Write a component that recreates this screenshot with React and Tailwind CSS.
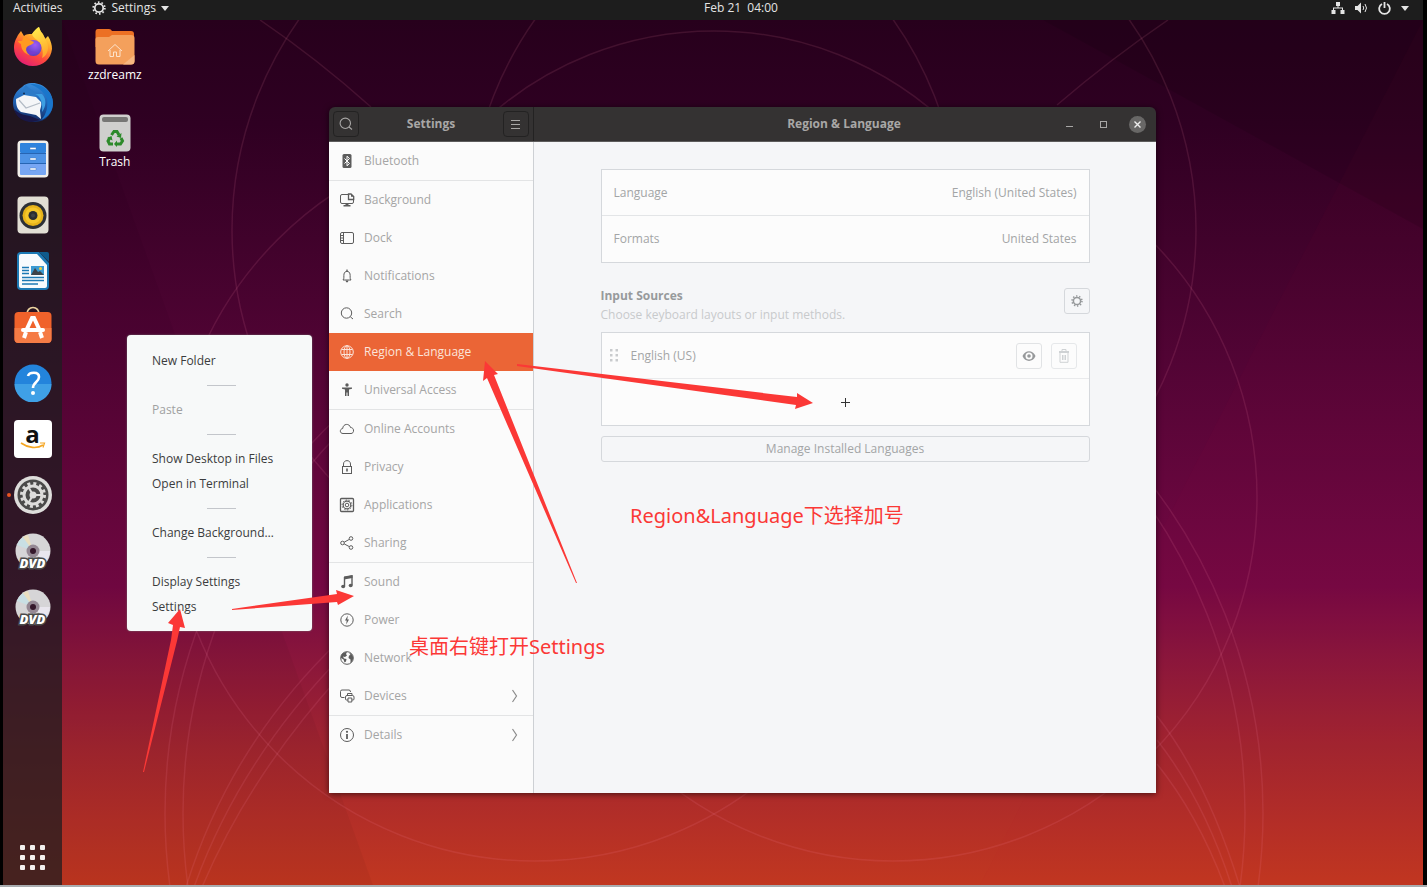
import { useState } from "react";

const dockApps = [
  { name: "Firefox", Icon: FirefoxIcon },
  { name: "Thunderbird", Icon: ThunderbirdIcon },
  { name: "Files", Icon: FilesIcon },
  { name: "Rhythmbox", Icon: RhythmboxIcon },
  { name: "LibreOffice Writer", Icon: WriterIcon },
  { name: "Ubuntu Software", Icon: SoftwareIcon },
  { name: "Help", Icon: HelpIcon },
  { name: "Amazon", Icon: AmazonIcon },
  { name: "Settings", Icon: SettingsIcon, running: true },
  { name: "DVD 1", Icon: DvdIcon },
  { name: "DVD 2", Icon: DvdIcon },
];

const sidebarGroups = [
  ["Bluetooth"],
  ["Background", "Dock", "Notifications", "Search", "Region & Language", "Universal Access"],
  ["Online Accounts", "Privacy", "Applications", "Sharing"],
  ["Sound", "Power", "Network", "Devices"],
  ["Details"],
];

const menuGroups = [
  ["New Folder"],
  ["Paste"],
  ["Show Desktop in Files", "Open in Terminal"],
  ["Change Background…"],
  ["Display Settings", "Settings"],
];

function FirefoxIcon() {
  return (
    <svg width="40" height="40" viewBox="0 0 40 40">
      <defs>
        <linearGradient id="fx1" x1="0.8" y1="0" x2="0.25" y2="1">
          <stop offset="0" stopColor="#fff24a" />
          <stop offset="0.35" stopColor="#ffa52b" />
          <stop offset="0.65" stopColor="#ff4a3c" />
          <stop offset="1" stopColor="#e01a78" />
        </linearGradient>
        <radialGradient id="fx2" cx="0.6" cy="0.3" r="0.8">
          <stop offset="0" stopColor="#a05bf5" />
          <stop offset="1" stopColor="#4b3ab8" />
        </radialGradient>
        <linearGradient id="fx3" x1="0" y1="0" x2="0.4" y2="1">
          <stop offset="0" stopColor="#fff452" />
          <stop offset="1" stopColor="#ffb02e" />
        </linearGradient>
      </defs>
      <path d="M5 8 L8 4 L11 9 C13 7 16 7 19 7 C21 4 24 1 26 0 C27 3 28 5 30 7 L32 12 C33 11 34 10 35 9 C38 14 39 18 39 22 C38 32 30 39 20 39 C9 39 1 31 1 21 C1 15 3 12 5 8 Z" fill="url(#fx1)" />
      <path d="M19 7 C21 4 24 1 26 0 C27 5 31 8 33 13 C37 20 35 28 29 31 C31 26 29 19 26 15 C24 12 20 11 19 7 Z" fill="url(#fx3)" opacity="0.9" />
      <circle cx="20.500" cy="21" r="8" fill="url(#fx2)" />
      <path d="M11 9 C14 12 17 13 21 15 C20 18 16 18 14 20 C12 22 14 26 17 28 C11 27 8 22 8 17 C6 16 5 15 5 14 L9 14 Z" fill="#ff9a20" />
      <path d="M13 22 C16 24 20 25 24 25 C22 28 17 29 14 26 Z" fill="#7a3ad0" opacity="0.7" />
    </svg>
  );
}

function ThunderbirdIcon() {
  return (
    <svg width="42" height="42" viewBox="0 0 42 42">
      <defs>
        <linearGradient id="tb1" x1="0.6" y1="0" x2="0.5" y2="1">
          <stop offset="0" stopColor="#3a8fdd" />
          <stop offset="0.5" stopColor="#1f62b4" />
          <stop offset="1" stopColor="#142860" />
        </linearGradient>
      </defs>
      <path d="M10 5 C13 2 16 1 19 1 C30 0 41 9 41 21 C41 31 34 40 23 40 C12 40 1 33 1 21 C1 14 4 9 10 5 Z" fill="url(#tb1)" />
      <path d="M14 3 C9 8 10 13 14 15 L27 14 C24 9 18 8 14 3 Z" fill="#2c7ac8" />
      <path d="M18 2 C25 5 32 9 35 17 C36 24 35 32 29 38 C37 35 41 28 41 21 C41 10 30 1 18 2 Z" fill="#1a76cb" />
      <path d="M23 12 C29 14 31 22 30 30 C34 25 35 17 30 12 Z" fill="#3d9fe2" />
      <path d="M4 17 L12 13 L24 15 L29 20 C30 24 28 27 28 29 L29 37 L24 33 L9 30 C5 27 4 23 4 17 Z" fill="#f5f6f8" />
      <path d="M7 18 L14 26 L28 21" fill="none" stroke="#b4bcc6" strokeWidth="1.200" />
      <circle cx="12" cy="11.500" r="1" fill="#122b52" />
      <path d="M2 27 C4 35 11 40 20 40 L28 38 L18 34 C11 33 6 31 2 27 Z" fill="#191747" />
    </svg>
  );
}

function FilesIcon() {
  return (
    <svg width="32" height="38" viewBox="0 0 32 38">
      <rect x="0.500" y="0.500" width="31" height="37" rx="4" fill="#f2efea" />
      <rect x="3" y="3" width="26" height="10" rx="1" fill="#2f83dd" />
      <rect x="3" y="14" width="26" height="9" fill="#4e93e6" />
      <path d="M3 24 H29 V34 Q29 35 28 35 H4 Q3 35 3 34 Z" fill="#77a6f3" />
      {[7.5, 18, 28].map((y) => (
        <path key={y} d={`M13 ${y} H19 V${y + 2} H13 Z`} fill="#fff" stroke="#3c73b8" strokeWidth="0.400" />
      ))}
      <path d="M3 13.500 H29 M3 23.500 H29" stroke="#2765b3" />
    </svg>
  );
}

function RhythmboxIcon() {
  return (
    <svg width="32" height="38" viewBox="0 0 32 38">
      <rect x="0.500" y="0.500" width="31" height="37" rx="4" fill="#e2ded4" />
      <circle cx="16" cy="19.500" r="13.500" fill="#2d3036" />
      <circle cx="16" cy="19.500" r="10.500" fill="#e7b31a" />
      <circle cx="16" cy="19.500" r="8" fill="#f5c62a" />
      <circle cx="16" cy="19.500" r="4.500" fill="#2b2d31" />
      <circle cx="16" cy="19.500" r="2" fill="#3e4147" />
    </svg>
  );
}

function WriterIcon() {
  return (
    <svg width="32" height="38" viewBox="0 0 32 38">
      <path d="M4 0 H22 L32 11 V34 Q32 38 28 38 H4 Q0 38 0 34 V4 Q0 0 4 0 Z" fill="#1c79b4" />
      <path d="M4 2 H20 L30 13 V34 Q30 36 28 36 H4 Q2 36 2 34 V4 Q2 2 4 2 Z" fill="#f8fbfd" />
      <path d="M22 0 H30 Q32 0 32 2 V10 Z" fill="#0f5a8c" />
      <path d="M5 15.500 H12 M5 18.500 H12 M5 21.500 H12 M5 25.500 H27 M5 28.500 H27 M5 32 H21" stroke="#1c79b4" strokeWidth="1.500" />
      <rect x="14" y="14" width="13" height="9" fill="#3b9bd2" />
      <path d="M14 23 L18 16 L21 20 L23 19 L27 23 Z" fill="#3d4349" />
      <circle cx="23.500" cy="16.500" r="1.500" fill="#f7cf3b" />
    </svg>
  );
}

function SoftwareIcon() {
  return (
    <svg width="38" height="42" viewBox="0 0 38 42">
      <path d="M13 9 C12 -1 26 -1 25 9" fill="none" stroke="#ecd3a0" strokeWidth="1.600" />
      <rect x="0.500" y="6" width="37" height="31" rx="4" fill="#f0622b" />
      <path d="M0.500 22 H37.500 V33 Q37.500 37 33.500 37 H4.500 Q0.500 37 0.500 33 Z" fill="#f57b45" />
      <path d="M12 25 L18 12 H20 L26 25" fill="none" stroke="#fff" strokeWidth="4" />
      <rect x="7" y="22" width="24" height="4" rx="2" fill="#fff" />
      <path d="M12 26 L10 32 M26 26 L28 32" stroke="#fff" strokeWidth="4" />
    </svg>
  );
}

function HelpIcon() {
  return (
    <svg width="38" height="38" viewBox="0 0 38 38">
      <circle cx="19" cy="19" r="18.500" fill="#2384dc" />
      <path d="M0.500 20 H37.500 A18.500 18.500 0 0 1 0.500 20 Z" fill="#3fa0e6" />
      <path d="M14 12 C15 8 25 7 25 13 C25 18 19 18 19 24" fill="none" stroke="#fff" strokeWidth="2.600" />
      <circle cx="19" cy="29" r="2" fill="#fff" />
    </svg>
  );
}

function AmazonIcon() {
  return (
    <span className="relative flex size-[38px] justify-center rounded bg-white text-2xl leading-7 font-bold text-[#111]">
      a
      <svg width="26" height="8" viewBox="0 0 26 8" fill="none" stroke="#f5a623" className="absolute bottom-2">
        <path d="M1 1 C8 6 17 7 23 3" strokeWidth="1.600" />
        <path d="M20 1 L24.500 1 L23 5.500" strokeWidth="1.200" />
      </svg>
    </span>
  );
}

function SettingsIcon() {
  return (
    <svg width="38" height="38" viewBox="0 0 38 38">
      <circle cx="19" cy="19" r="19" fill="#dedddb" />
      <circle cx="19" cy="19" r="15.500" fill="#4b4a49" />
      <circle cx="19" cy="19" r="11.500" fill="none" stroke="#dddcda" strokeWidth="3" strokeDasharray="3 3.020" />
      <circle cx="19" cy="19" r="9" fill="none" stroke="#dddcda" strokeWidth="3" />
      <circle cx="19" cy="19" r="3.500" fill="#dddcda" />
      <path d="M19 19 H27 M19 19 L15 12 M19 19 L15 26" stroke="#dddcda" strokeWidth="2" />
    </svg>
  );
}

function DvdIcon() {
  return (
    <span className="relative flex items-end justify-center">
      <svg width="36" height="36" viewBox="0 0 36 36">
        <circle cx="18" cy="18" r="17.500" fill="#d6d5d7" />
        <path d="M18 18 L2 12 A17 17 0 0 1 8 4 Z" fill="#c9dfe4" />
        <path d="M18 18 L8 4 A17 17 0 0 1 13 2 Z" fill="#eadfc0" />
        <path d="M18 18 L35 18 A17 17 0 0 1 30 29 Z" fill="#e9e6ee" />
        <circle cx="18" cy="18" r="6.500" fill="#958894" />
        <circle cx="18" cy="18" r="3" fill="#35172b" />
      </svg>
      <span className="absolute -bottom-1 text-[13px] leading-5 font-extrabold text-white italic [-webkit-text-stroke:3px_#4a4a4a] [paint-order:stroke_fill]">
        DVD
      </span>
    </span>
  );
}

function SmallGear({ size = 14 }) {
  return (
    <svg width={size} height={size} viewBox="0 0 14 14" fill="none" stroke="currentColor">
      <circle cx="7" cy="7" r="4.200" strokeWidth="1.800" />
      <circle cx="7" cy="7" r="5.800" strokeWidth="1.800" strokeDasharray="1.600 2.044" />
    </svg>
  );
}

function SearchIcon() {
  return (
    <svg width="14" height="14" viewBox="0 0 14 14" fill="none" stroke="currentColor" strokeWidth="1.100">
      <circle cx="6.300" cy="6.300" r="5.200" />
      <path d="M10 10 L13 12.500" />
    </svg>
  );
}

const panelDrawings = {
  Bluetooth: (
    <>
      <rect x="3.500" y="1" width="9" height="14" rx="1.500" fill="currentColor" stroke="none" />
      <path d="M5.500 5.500 L10.500 10.500 L8 12.800 V3.200 L10.500 5.500 L5.500 10.500" stroke="#fff" strokeWidth="1" />
    </>
  ),
  Background: (
    <>
      <path d="M9 2.500 H3 Q1.500 2.500 1.500 4 V10 Q1.500 11.500 3 11.500 H13 Q14.500 11.500 14.500 10 V6" />
      <path d="M9.500 2 H12 L14.700 4.500 V7.500 H9.500 Z" strokeWidth="1.300" />
      <path d="M12 2 L14.700 4.800 H12 Z M6.500 11.500 H9.500 V13 H11.500 V14.500 H4.500 V13 H6.500 Z" fill="currentColor" stroke="none" />
    </>
  ),
  Dock: (
    <>
      <rect x="1.500" y="2.500" width="13" height="11" rx="1.500" />
      <path d="M4.500 3 V13 M2 5.500 H4 M2 8 H4 M2 10.500 H4" />
    </>
  ),
  Notifications: (
    <>
      <path d="M4 12 C5.500 10.500 4.500 8 5 6 C5.500 2.500 10.500 2.500 11 6 C11.500 8 10.500 10.500 12 12 Z" />
      <path d="M7 2.500 Q8 1.300 9 2.500" />
      <path d="M6.500 12.500 H9.500 Q9 14.500 8 14.500 Q7 14.500 6.500 12.500 Z" fill="currentColor" stroke="none" />
    </>
  ),
  Search: (
    <>
      <circle cx="7.500" cy="7" r="5.200" />
      <path d="M11.300 10.800 L14 13" />
    </>
  ),
  "Region & Language": (
    <>
      <circle cx="8" cy="8" r="6.300" />
      <ellipse cx="8" cy="8" rx="3" ry="6.300" />
      <path d="M8 1.700 V14.300 M2.500 5.500 H13.500 M2.500 10.500 H13.500" />
    </>
  ),
  "Universal Access": (
    <>
      <circle cx="8" cy="3" r="1.700" fill="currentColor" stroke="none" />
      <path d="M3 5.500 H13 V6.800 L10 7.500 V14 H8.500 V10.500 H7.500 V14 H6 V7.500 L3 6.800 Z" fill="currentColor" stroke="none" />
    </>
  ),
  "Online Accounts": <path d="M4 12.500 C0.500 12.500 0.500 8 3.700 7.500 C4 2.500 10.500 2 11.500 6.500 C15.500 6.500 15.500 12.500 12 12.500 Z" />,
  Privacy: (
    <>
      <rect x="3.500" y="7.500" width="9" height="7" />
      <path d="M4.500 7.500 V5 C4.500 0.500 11.500 0.500 11.500 5 V7.500" />
      <path d="M8 9.500 V12.500" strokeWidth="1.600" />
    </>
  ),
  Applications: (
    <>
      <rect x="1.500" y="1.500" width="13" height="13" rx="1" strokeWidth="1.300" />
      <circle cx="8" cy="8" r="3.800" strokeWidth="1.200" />
      <circle cx="8" cy="8" r="1.800" />
      <circle cx="8" cy="8" r="4.900" strokeDasharray="1.500 1.500" />
    </>
  ),
  Sharing: (
    <>
      <circle cx="3.500" cy="8" r="1.800" />
      <circle cx="12" cy="3.500" r="1.800" />
      <circle cx="12" cy="12.500" r="1.800" />
      <path d="M5.200 7.200 L10.300 4.400 M5.200 8.900 L10.300 11.600" />
    </>
  ),
  Sound: (
    <>
      <path d="M5.500 12 V3.500 L13 2 V11" strokeWidth="1.400" />
      <path d="M5 2.500 L13.500 1 V4 L5 5.500 Z" fill="currentColor" stroke="none" />
      <ellipse cx="4.200" cy="12.500" rx="2" ry="1.700" fill="currentColor" stroke="none" />
      <ellipse cx="11.700" cy="11.500" rx="2" ry="1.700" fill="currentColor" stroke="none" />
    </>
  ),
  Power: (
    <>
      <circle cx="8" cy="8" r="6.200" />
      <path d="M8.800 3.500 L6 8.500 H7.700 L7.200 12.500 L10 7.500 H8.300 Z" fill="currentColor" stroke="none" />
    </>
  ),
  Network: (
    <>
      <circle cx="8" cy="8" r="6.300" />
      <path d="M2 6 C3 3 5 2 8 2 L7 4 L8 5.500 L6 7 L4 6.500 L5 8.500 L7.500 9 L7 11.500 L5.500 12.500 L4.500 9.500 L2 8 Z M10 2.500 C13 3.500 14.500 6 14 9 C13.500 11 12.500 12.500 11.500 13 L11.500 9.500 L9.500 8 L10 5.500 L11.500 5 Z" fill="currentColor" stroke="none" />
    </>
  ),
  Devices: (
    <>
      <path d="M5.500 9.500 H3 Q1.500 9.500 1.500 8 V3.500 Q1.500 2 3 2 H10 Q11.500 2 11.500 4" />
      <path d="M9 12 H7.500 Q6.500 12 6.500 11 V9 Q6.500 7.500 8 7.500 H13.500 Q15 7.500 15 9 V11 Q15 12 14 12 H13" />
      <path d="M8.500 7.500 V5.500 H13 V7.500 M9 10 H12.800 V14 H9 Z" />
    </>
  ),
  Details: (
    <>
      <circle cx="8" cy="8" r="6.500" />
      <path d="M8 7 V12" strokeWidth="1.800" />
      <circle cx="8" cy="4.800" r="1.100" fill="currentColor" stroke="none" />
    </>
  ),
};

function PanelIcon({ name }) {
  return (
    <svg width="16" height="16" viewBox="0 0 16 16" fill="none" stroke="currentColor" strokeWidth="1" className="shrink-0">
      {panelDrawings[name]}
    </svg>
  );
}

function Wallpaper() {
  return (
    <svg className="absolute inset-0 w-full h-full" viewBox="3 20 1420 865" preserveAspectRatio="xMidYMid slice">
      <defs>
        <linearGradient id="sky" gradientUnits="userSpaceOnUse" x1="0" y1="20" x2="0" y2="885">
          <stop offset="0" stopColor="#27001c" />
          <stop offset="0.12" stopColor="#2f0022" />
          <stop offset="0.4" stopColor="#530435" />
          <stop offset="0.655" stopColor="#740843" />
          <stop offset="0.74" stopColor="#8a163b" />
          <stop offset="0.84" stopColor="#a1252f" />
          <stop offset="0.93" stopColor="#b42f27" />
          <stop offset="1" stopColor="#c13720" />
        </linearGradient>
      </defs>
      <rect x="3" y="20" width="1420" height="865" fill="url(#sky)" />
      <path d="M1043 20 H1423 V229 Z" fill="#000" opacity="0.100" />
      <path d="M1423 20 V885 H980 Z" fill="#c0104a" opacity="0.030" />
      <path d="M62 20 L373 885 H62 Z" fill="#000" opacity="0.040" />
      <g fill="none" stroke="#ff8fae" strokeOpacity="0.120" strokeWidth="1.500">
        <circle cx="832" cy="230" r="364" />
        <circle cx="596" cy="230" r="364" />
        <circle cx="714" cy="370" r="339" />
        <circle cx="893" cy="497" r="364" />
        <circle cx="535" cy="497" r="364" />
        <circle cx="723" cy="813" r="540" />
        <circle cx="705" cy="813" r="540" />
        <path d="M1168 20 Q1112 58 1057 105 M260 20 Q316 58 371 107" />
        <path d="M1157 716 Q1207 780 1240 887 M1157 740 Q1204 800 1232 887 M1157 764 Q1198 815 1225 887" />
        <path d="M340 640 Q230 745 186 887 M340 658 Q240 760 194 887 M340 676 Q250 775 202 887" />
      </g>
    </svg>
  );
}

function TopBar() {
  return (
    <header className="flex h-5 shrink-0 items-center bg-[#1d1d1d] pr-3.5 pb-1 pl-2.5 text-[12px] leading-4 text-[#e4e4e4]">
      <div className="flex w-[49.5%] shrink-0 items-center gap-[30px]">
        <button type="button">Activities</button>
        <button type="button" className="flex items-center gap-[5px]">
          <SmallGear />
          Settings
          <svg width="8" height="5" viewBox="0 0 8 5"><path d="M0 0 H8 L4 5 Z" fill="currentColor" /></svg>
        </button>
      </div>
      <button type="button" className="whitespace-pre">Feb 21  04:00</button>
      <button type="button" aria-label="System menu" className="ml-auto flex items-center gap-2.5">
        <svg width="14" height="12" viewBox="0 0 14 12" fill="currentColor">
          <path d="M5 0 H9 V4 H7.500 V5.500 H12 V8 H13.500 V12 H9.500 V8 H11 V6.500 H3 V8 H4.500 V12 H0.500 V8 H2 V5.500 H6.500 V4 H5 Z" />
        </svg>
        <svg width="13" height="12" viewBox="0 0 13 12" fill="currentColor">
          <path d="M0 4 H2.500 L6 0.500 V11.500 L2.500 8 H0 Z" />
          <path d="M8 4 Q9.500 6 8 8 M10 2 Q13 6 10 10" fill="none" stroke="currentColor" />
        </svg>
        <svg width="13" height="13" viewBox="0 0 13 13" fill="none" stroke="currentColor" strokeWidth="1.800">
          <path d="M4 2 A5.300 5.300 0 1 0 9 2 M6.500 0 V6" />
        </svg>
        <svg width="8" height="5" viewBox="0 0 8 5"><path d="M0 0 H8 L4 5 Z" fill="currentColor" /></svg>
      </button>
    </header>
  );
}

function Dock() {
  return (
    <nav aria-label="Dock" className="relative flex w-[59px] shrink-0 flex-col bg-[#1e1c1f]/75">
      <div className="-mt-px flex flex-col">
        {dockApps.map(({ name, Icon, running }) => (
          <button key={name} type="button" aria-label={name} className="relative flex h-14 items-center justify-center">
            {running && <span className="absolute left-1 size-1 rounded-full bg-[#e95420]" />}
            <Icon />
          </button>
        ))}
      </div>
      <button type="button" aria-label="Show Applications" className="mt-auto mb-[15px] grid grid-cols-3 gap-[5px] self-center">
        {Array.from({ length: 9 }, (_, i) => (
          <span key={i} className="size-[5px] rounded-[1px] bg-[#f3f0ee]" />
        ))}
      </button>
    </nav>
  );
}

function DesktopIcons() {
  return (
    <div className="flex flex-col items-center gap-[31px] pt-[9px] pl-[26px] text-[12px] leading-4 text-white">
      <button type="button" className="flex flex-col items-center gap-0.5">
        <svg width="40" height="36" viewBox="0 0 40 36">
          <path d="M3 0 H14 Q16 0 17 2 H36 Q39 2 39 5 V18 H0.500 V3 Q0.500 0 3 0 Z" fill="#ec7024" />
          <path d="M0.500 10 Q0.500 8 3 8 H14 L17 6 H36 Q39.500 6 39.500 9 V32 Q39.500 35.500 36 35.500 H4 Q0.500 35.500 0.500 32 Z" fill="#f4a05c" />
          <path d="M28 35.500 L39.500 26 V32 Q39.500 35.500 36 35.500 Z" fill="#f7b781" />
          <path d="M13 22 L20 15.500 L27 22 M15 21 V27.500 H18.500 V23 H21.500 V27.500 H25 V21" fill="none" stroke="#fde3cb" />
        </svg>
        zzdreamz
      </button>
      <button type="button" className="flex flex-col items-center gap-0.5">
        <svg width="32" height="38" viewBox="0 0 32 38">
          <rect x="0.500" y="0.500" width="31" height="37" rx="4" fill="#cfcfcd" />
          <rect x="3" y="3" width="26" height="5" rx="2" fill="#777775" />
          <g fill="none" stroke="#2c8a2a" strokeWidth="3">
            <path d="M12.500 21 L15 17.500 H18 L20 21" />
            <path d="M22 24 L23.500 27 L21.500 30 H17.500" />
            <path d="M14 30 H10.500 L9 27 L11 23.500" />
          </g>
          <path d="M17.500 22.500 L22.500 19 L22 24 Z M18 26.500 V33 L15 30 Z M8 24 L12.500 22 L13.500 26.500 Z" fill="#2c8a2a" />
        </svg>
        Trash
      </button>
    </div>
  );
}

function ContextMenu() {
  return (
    <div role="menu" className="absolute top-[315px] left-[124px] w-[185px] rounded bg-[#f7f9f9] pt-[13px] pb-3 text-[12px] text-[#3b3c3d] shadow-[0_0_2px_#777]">
      {menuGroups.map((items, i) => (
        <div key={items[0]}>
          {i > 0 && (
            <div role="separator" className="flex h-6 items-center justify-center pl-1">
              <span className="h-px w-[29px] bg-[#c3c6cb]" />
            </div>
          )}
          {items.map((item) => (
            <button
              key={item}
              type="button"
              role="menuitem"
              disabled={item === "Paste"}
              className="block h-[25px] w-full pl-[25px] text-left disabled:text-[#a0a1a1]"
            >
              {item}
            </button>
          ))}
        </div>
      ))}
    </div>
  );
}

function Sidebar({ active, onSelect }) {
  return (
    <nav aria-label="Settings panels" className="w-[205px] shrink-0 border-r border-[#cdd0d4] bg-[#fbfbfb] pb-[39px]">
      {sidebarGroups.map((group, i) => (
        <div key={group[0]} className={i > 0 ? "border-t border-[#e3e4e5]" : ""}>
          {group.map((name) => (
            <button
              key={name}
              type="button"
              onClick={() => onSelect(name)}
              className={`flex h-[38px] w-full items-center gap-[9px] pr-[15px] pl-2.5 text-left ${
                active === name ? "bg-[#eb6536] text-[#fbe4da]" : "text-[#5c5c5c]"
              }`}
            >
              <PanelIcon name={name} />
              <span className={active === name ? "" : "text-[#a5a5a5]"}>{name}</span>
              {(name === "Devices" || name === "Details") && (
                <svg width="7" height="14" viewBox="0 0 7 14" fill="none" stroke="#8b8b8b" strokeWidth="1.200" className="ml-auto">
                  <path d="M1.500 1 L5.500 7 L1.500 13" />
                </svg>
              )}
            </button>
          ))}
        </div>
      ))}
    </nav>
  );
}

function RegionPanel() {
  return (
    <main className="flex-1 bg-[#f5f6f8] px-6 pt-[27px] text-[#a3a5a6]">
      <div className="mx-auto max-w-[489px]">
        <div className="divide-y divide-[#e3e5e7] border border-[#d5d8dc] bg-[#fcfcfc]">
          <button type="button" className="flex h-[46px] w-full items-center justify-between px-3">
            <span>Language</span>
            <span>English (United States)</span>
          </button>
          <button type="button" className="flex h-[46px] w-full items-center justify-between px-3">
            <span>Formats</span>
            <span>United States</span>
          </button>
        </div>

        <div className="mt-6 mb-[7px] flex items-center justify-between">
          <div>
            <h2 className="font-bold leading-[18px] text-[#979a9c]">Input Sources</h2>
            <p className="leading-5 text-[#c8cacc]">Choose keyboard layouts or input methods.</p>
          </div>
          <button type="button" aria-label="Input source options" className="mb-2.5 flex size-[26px] items-center justify-center rounded-[3px] border border-[#d5d8dc] text-[#96999b]">
            <SmallGear size={12} />
          </button>
        </div>

        <div className="divide-y divide-[#e9eaec] border border-[#d5d8dc] bg-[#fcfcfc]">
          <div className="flex h-[46px] items-center pr-3 pl-2">
            <svg width="8" height="13" viewBox="0 0 8 13" fill="#c9cbcd">
              <path d="M0 0 h2.500 v2.500 h-2.500 Z M5.500 0 h2.500 v2.500 h-2.500 Z M0 5 h2.500 v2.500 h-2.500 Z M5.500 5 h2.500 v2.500 h-2.500 Z M0 10 h2.500 v2.500 h-2.500 Z M5.500 10 h2.500 v2.500 h-2.500 Z" />
            </svg>
            <span className="ml-[13px]">English (US)</span>
            <button type="button" aria-label="View layout" className="ml-auto flex size-[26px] items-center justify-center rounded-[3px] border border-[#e1e3e5]">
              <svg width="14" height="12" viewBox="0 0 14 12">
                <path d="M0.500 6 C3 -0.500 11 -0.500 13.500 6 C11 12.500 3 12.500 0.500 6 Z" fill="#97999b" />
                <circle cx="7" cy="6" r="3.500" fill="#fcfcfc" />
                <circle cx="7" cy="6" r="1.800" fill="#97999b" />
              </svg>
            </button>
            <button type="button" disabled aria-label="Remove" className="ml-[9px] flex size-[26px] items-center justify-center rounded-[3px] border border-[#e6e8ea]">
              <svg width="12" height="14" viewBox="0 0 12 14" fill="none" stroke="#cfd2d4">
                <path d="M1 3 H11" strokeWidth="2" />
                <path d="M4 2 V0.500 H8 V2 M2 4 V13.300 H10 V4 M4.500 6 V11 M6 6 V11 M7.500 6 V11" />
              </svg>
            </button>
          </div>
          <button type="button" aria-label="Add input source" className="flex h-[46px] w-full items-center justify-center">
            <svg width="9" height="9" viewBox="0 0 9 9" stroke="#333" shapeRendering="crispEdges">
              <path d="M4.500 0 V9 M0 4.500 H9" />
            </svg>
          </button>
        </div>

        <button type="button" className="mt-2.5 h-[26px] w-full rounded-[3px] border border-[#d5d8dc]">
          Manage Installed Languages
        </button>
      </div>
    </main>
  );
}

function SettingsWindow() {
  const [active, setActive] = useState("Region & Language");

  return (
    <section className="absolute top-[87px] right-[267px] left-[326px] overflow-hidden rounded-t-md text-[12px] shadow-[0_1px_6px_rgba(0,0,0,0.6)]">
      <div className="flex h-[35px] border-b border-[#5d5c5c] bg-[#343232] text-[#a8a7a6]">
        <div className="flex w-[205px] shrink-0 items-center justify-between border-r border-[#232222] px-1">
          <button type="button" aria-label="Search" className="flex size-[26px] items-center justify-center rounded border border-[#232222]">
            <SearchIcon />
          </button>
          <h1 className="font-bold">Settings</h1>
          <button type="button" aria-label="Menu" className="flex size-[26px] items-center justify-center rounded border border-[#232222]">
            <svg width="9" height="9" viewBox="0 0 9 9" stroke="currentColor" shapeRendering="crispEdges">
              <path d="M0 0.500 H9 M0 4.500 H9 M0 8.500 H9" />
            </svg>
          </button>
        </div>
        <div className="grid flex-1 grid-cols-[1fr_auto_1fr] items-center pr-0.5">
          <span />
          <h2 className="font-bold">Region &amp; Language</h2>
          <div className="flex items-center justify-end">
            <button type="button" aria-label="Minimize" className="flex h-[26px] w-[34px] items-center justify-center">
              <span className="mt-1 h-px w-[7px] bg-current" />
            </button>
            <button type="button" aria-label="Maximize" className="flex h-[26px] w-[34px] items-center justify-center">
              <span className="size-[7px] border border-current" />
            </button>
            <button type="button" aria-label="Close" className="flex h-[26px] w-[34px] items-center justify-center">
              <span className="flex size-[17px] items-center justify-center rounded-full bg-[#686766]">
                <svg width="7" height="7" viewBox="0 0 7 7" stroke="#eee" strokeWidth="1.400">
                  <path d="M0.500 0.500 L6.500 6.500 M6.500 0.500 L0.500 6.500" />
                </svg>
              </span>
            </button>
          </div>
        </div>
      </div>
      <div className="flex">
        <Sidebar active={active} onSelect={setActive} />
        <RegionPanel />
      </div>
    </section>
  );
}

// Red arrows and notes drawn over the desktop
function Annotations() {
  return (
    <div className="pointer-events-none absolute inset-0 font-['Noto_Sans','Noto_Sans_CJK_SC',sans-serif] text-xl leading-7 whitespace-nowrap text-[#fb3836]">
      <svg className="absolute inset-0 w-full h-full" fill="#fb3836">
        <path d="M143 772 L171 640 L173 625 L168 623 L180 609 L185 628 L180 627 L177 641 L144 772 Z" />
        <path d="M232 609 L337 594 L336 590 L354 596 L338 605 L337 602 L232 610 Z" />
        <path d="M577 583 L494 375 L498 374 L485 361 L483 381 L487 378 L576 583 Z" />
        <path d="M517 364 L797 397 L797 393 L813 403 L795 409 L796 405 L517 366 Z" />
      </svg>
      <p className="absolute top-[502px] left-[630px]">Region&amp;Language下选择加号</p>
      <p className="absolute top-[633px] left-[409px]">桌面右键打开Settings</p>
    </div>
  );
}

export default function App() {
  return (
    <div className="relative flex h-screen flex-col overflow-hidden border-b-2 border-[#a9adb0] bg-black pr-1 pl-[3px] font-['Open_Sans','Noto_Sans_CJK_SC',sans-serif]">
      <TopBar />
      <div className="relative flex flex-1 overflow-hidden">
        <Wallpaper />
        <Dock />
        <div className="relative">
          <DesktopIcons />
        </div>
        <ContextMenu />
        <SettingsWindow />
      </div>
      <Annotations />
    </div>
  );
}
